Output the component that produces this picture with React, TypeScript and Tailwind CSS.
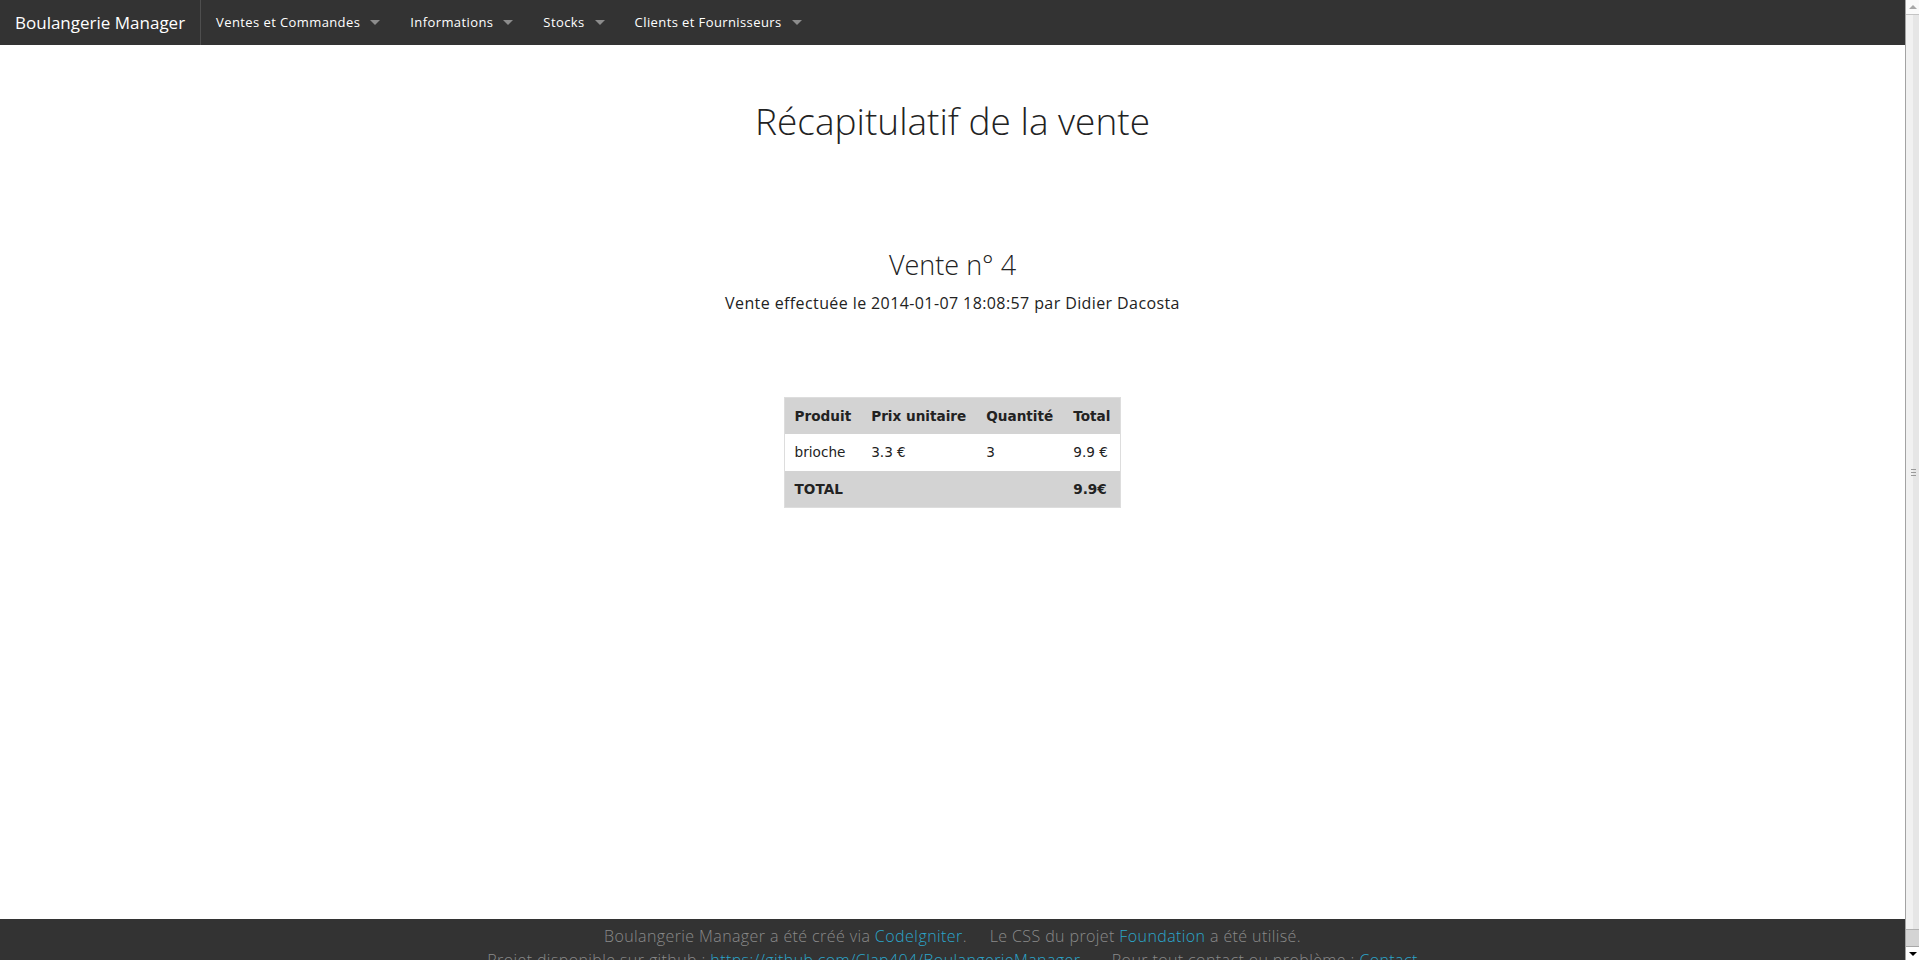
import React from 'react'

const menus = ['Ventes et Commandes', 'Informations', 'Stocks', 'Clients et Fournisseurs']

function TopBar() {
  return (
    <nav className="flex h-[45px] bg-[#333333] font-['Open_Sans',sans-serif] text-white">
      <a className="border-r border-[#4e4e4e] px-[15px] text-[17px] leading-[45px] text-white">
        Boulangerie Manager
      </a>
      <ul className="flex">
        {menus.map((m) => (
          <li key={m} className="flex items-center px-[15px] text-[13px] leading-[45px] tracking-[0.4px]">
            <span>{m}</span>
            <span className="ml-[10px] h-0 w-0 border-x-[5px] border-t-[5px] border-x-transparent border-t-[#8c8c8c]" />
          </li>
        ))}
      </ul>
    </nav>
  )
}

function SaleTable() {
  const th = 'px-[10px] py-[9px] text-left font-bold leading-[18px]'
  const td = 'px-[10px] py-[9px] text-left leading-[19px]'
  return (
    <table className="mx-auto border border-[#dddddd] font-['DejaVu_Sans',sans-serif] text-[13.6px] text-[#222222]">
      <thead className="bg-[#d3d3d3]">
        <tr>
          <th className={th}>Produit</th>
          <th className={th}>Prix unitaire</th>
          <th className={th}>Quantité</th>
          <th className={th}>Total</th>
        </tr>
      </thead>
      <tbody>
        <tr className="bg-white">
          <td className={td}>brioche</td>
          <td className={td}>3.3 €</td>
          <td className={td}>3</td>
          <td className={td}>9.9 €</td>
        </tr>
        <tr className="bg-[#d3d3d3]">
          <td className={th}>TOTAL</td>
          <td className={th}></td>
          <td className={th}></td>
          <td className={th}>9.9€</td>
        </tr>
      </tbody>
    </table>
  )
}

function Footer() {
  const link = 'text-[#2ba6cb]'
  return (
    <footer className="bg-[#333333] pb-[20px] pt-[5px] text-center font-['Open_Sans',sans-serif] text-[16px] font-light leading-[24px] tracking-[0.4px] text-[#8a8a8a]">
      <p>
        Boulangerie Manager a été créé via <a className={link}>CodeIgniter</a>.&nbsp;&nbsp;&nbsp;&nbsp; Le CSS du projet{' '}
        <a className={link}>Foundation</a> a été utilisé.
      </p>
      <p>
        Projet disponible sur github : <a className={link}>https://github.com/Clap404/BoulangerieManager</a>.&nbsp;&nbsp;&nbsp;&nbsp;&nbsp; Pour
        tout contact ou problème : <a className={link}>Contact</a>
      </p>
    </footer>
  )
}

function ScrollBar() {
  return (
    <div className="flex h-full w-[14px] shrink-0 flex-col border-l border-[#a3a3a3] bg-[#f2f2f2]">
      <div className="flex h-[15px] shrink-0 items-center justify-center border-b border-[#c4c4c4] bg-[#fafafa]">
        <span className="h-0 w-0 border-x-[4px] border-b-[4px] border-x-transparent border-b-[#a8a8a8]" />
      </div>
      <div className="flex flex-1 flex-col items-end justify-center gap-[2px] bg-[linear-gradient(to_right,#f1f1f1_7px,#e6e6e6_7px)] pr-[3px]">
        <span className="h-px w-[5px] bg-[#9a9a9a]" />
        <span className="h-px w-[5px] bg-[#9a9a9a]" />
        <span className="h-px w-[5px] bg-[#9a9a9a]" />
      </div>
      <div className="h-[17px] shrink-0 border-t border-[#b0b0b0] bg-[#d4d4d4]" />
      <div className="flex h-[14px] shrink-0 items-center justify-center border-t border-[#a8a8a8] bg-white">
        <span className="h-0 w-0 border-x-[4px] border-t-[4px] border-x-transparent border-t-black" />
      </div>
    </div>
  )
}

export default function App() {
  return (
    <div className="flex h-screen w-full overflow-hidden bg-white">
      <div className="min-w-0 flex-1 overflow-hidden">
        <TopBar />
        <main className="min-h-[874px] text-center font-['Open_Sans',sans-serif] text-[#222222]">
          <h2 className="pt-[54px] text-[37px] font-light leading-[44px]">Récapitulatif de la vente</h2>
          <h3 className="mt-[106px] text-[27px] font-light leading-[32px]">Vente n° 4</h3>
          <p className="mt-[10px] text-[16px] leading-[24px] tracking-[0.4px]">
            Vente effectuée le 2014-01-07 18:08:57 par Didier Dacosta
          </p>
          <div className="mt-[82px]">
            <SaleTable />
          </div>
        </main>
        <Footer />
      </div>
      <ScrollBar />
    </div>
  )
}
